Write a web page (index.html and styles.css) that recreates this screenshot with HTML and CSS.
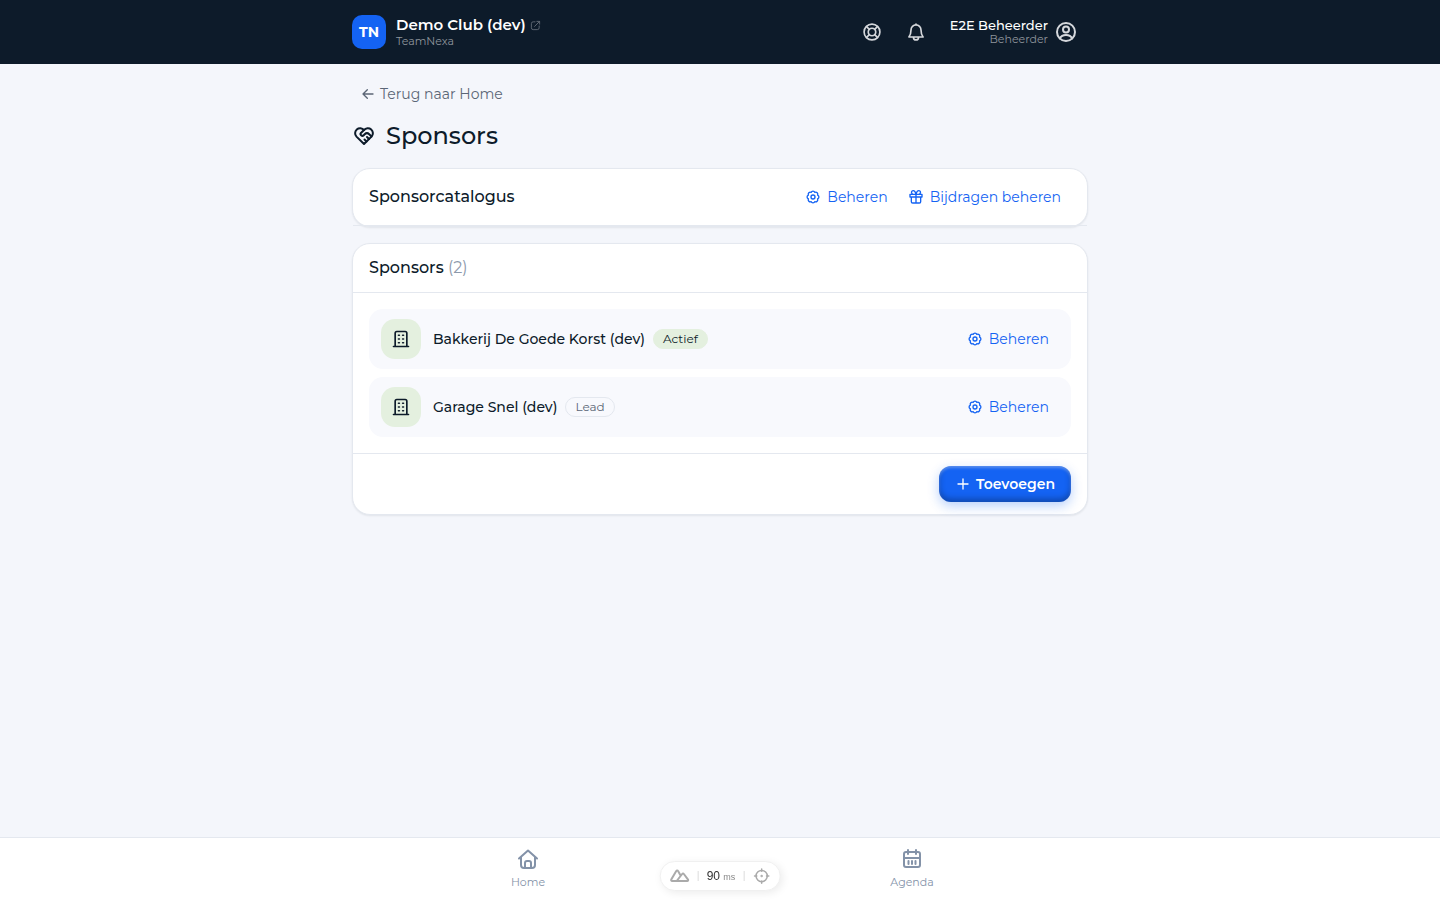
FILE: index.html
```html
<!DOCTYPE html>
<html lang="nl">
<head>
    <meta charset="UTF-8">
    <meta name="viewport" content="width=device-width, initial-scale=1.0">
    <title>Sponsors</title>
    <link rel="stylesheet" href="styles.css">
</head>
<body>
    <svg class="sprite" aria-hidden="true">
        <symbol id="gear" viewBox="0 0 24 24">
            <path d="M9.130 5.070a3.100 3.100 0 0 1 5.740 0a3.100 3.100 0 0 1 4.060 4.060a3.100 3.100 0 0 1 0 5.740a3.100 3.100 0 0 1-4.060 4.060a3.100 3.100 0 0 1-5.740 0a3.100 3.100 0 0 1-4.060-4.060a3.100 3.100 0 0 1 0-5.740a3.100 3.100 0 0 1 4.060-4.060z"/>
            <circle cx="12" cy="12" r="3"/>
        </symbol>
        <symbol id="building" viewBox="0 0 24 24">
            <path d="M3 21h18M5 21V5a2 2 0 0 1 2-2h10a2 2 0 0 1 2 2v16"/>
            <path d="M9 7.500h1M14 7.500h1M9 12h1M14 12h1M9 16.500h1M14 16.500h1"/>
        </symbol>
    </svg>

    <header class="topbar">
        <div class="container topbar-inner">
            <div class="logo">TN</div>
            <div class="club">
                <a href="#" class="club-name">Demo Club (dev)
                    <svg class="icon icon-link" viewBox="0 0 24 24"><path d="M11 4H7a4 4 0 0 0-4 4v9a4 4 0 0 0 4 4h9a4 4 0 0 0 4-4v-4M10 14L21 3M15 3h6v6"/></svg>
                </a>
                <span class="sub">TeamNexa</span>
            </div>
            <div class="actions">
                <button type="button" class="icon-button" aria-label="Help">
                    <svg class="icon icon-20" viewBox="0 0 24 24"><circle cx="12" cy="12" r="9.500"/><circle cx="12" cy="12" r="4.500"/><path d="M5.500 5.500l3.300 3.300M18.500 5.500l-3.300 3.300M5.500 18.500l3.300-3.300M18.500 18.500l-3.300-3.300"/></svg>
                </button>
                <button type="button" class="icon-button" aria-label="Meldingen">
                    <svg class="icon icon-20" viewBox="0 0 24 24"><path d="M12 2.500v1M12 3.500a6 6 0 0 1 6 6c0 4.500 1 6.500 2.500 8.500h-17c1.500-2 2.500-4 2.500-8.500a6 6 0 0 1 6-6zM9 18.500a3 3 0 0 0 6 0"/></svg>
                </button>
                <button type="button" class="user">
                    <span class="user-text">
                        <span class="user-name">E2E Beheerder</span>
                        <span class="sub">Beheerder</span>
                    </span>
                    <svg class="icon icon-24" viewBox="0 0 24 24"><circle cx="12" cy="12" r="9"/><circle cx="12" cy="9.500" r="3"/><path d="M6 18.500c1-2.500 3-3.500 6-3.500s5 1 6 3.500"/></svg>
                </button>
            </div>
        </div>
    </header>

    <main class="container">
        <a href="#" class="back">
            <svg class="icon icon-16" viewBox="0 0 24 24"><path d="M19.500 12h-15M11 5.500l-6.500 6.500l6.500 6.500"/></svg>
            Terug naar Home
        </a>
        <h1>
            <svg class="icon icon-24" viewBox="0 0 24 24"><path d="M19.500 12.600L12 20l-7.500-7.400a5 5 0 1 1 7.500-6.600a5 5 0 1 1 7.500 6.600"/><path d="M12 6L8.700 9.300a1 1 0 0 0 0 1.400l.5.500c.7.7 1.800.7 2.500 0l1-1a3.200 3.200 0 0 1 4.500 0l2.300 2.300M12.500 15.500l2 2M15 13l2 2"/></svg>
            Sponsors
        </h1>

        <section class="card">
            <div class="card-header catalog-header">
                <h2>Sponsorcatalogus</h2>
                <div class="links">
                    <button type="button" class="text-button"><svg class="icon icon-16"><use href="#gear"/></svg>Beheren</button>
                    <button type="button" class="text-button"><svg class="icon icon-16" viewBox="0 0 24 24"><path d="M3 8h18v4H3zM5 12v7a2 2 0 0 0 2 2h10a2 2 0 0 0 2-2v-7M12 8v13M12 8C11 4 9.500 2.500 8 2.500a2.600 2.600 0 0 0 0 5.500M12 8c1-4 2.500-5.500 4-5.500a2.600 2.600 0 0 1 0 5.500"/></svg>Bijdragen beheren</button>
                </div>
            </div>
        </section>

        <section class="card">
            <div class="card-header">
                <h2>Sponsors <span class="count">(2)</span></h2>
            </div>
            <ul class="list">
                <li class="row">
                    <span class="tile"><svg class="icon icon-20"><use href="#building"/></svg></span>
                    <span class="name">Bakkerij De Goede Korst (dev)</span>
                    <span class="badge badge-active">Actief</span>
                    <button type="button" class="text-button"><svg class="icon icon-16"><use href="#gear"/></svg>Beheren</button>
                </li>
                <li class="row">
                    <span class="tile"><svg class="icon icon-20"><use href="#building"/></svg></span>
                    <span class="name">Garage Snel (dev)</span>
                    <span class="badge">Lead</span>
                    <button type="button" class="text-button"><svg class="icon icon-16"><use href="#gear"/></svg>Beheren</button>
                </li>
            </ul>
            <div class="card-footer">
                <button type="button" class="primary">
                    <svg class="icon icon-16" viewBox="0 0 24 24"><path d="M12 4.500v15M4.500 12h15"/></svg>
                    Toevoegen
                </button>
            </div>
        </section>
    </main>

    <nav class="bottom-nav">
        <div class="bottom-nav-inner">
            <a href="#" class="nav-item">
                <svg class="icon icon-24" viewBox="0 0 24 24"><path d="M3 11.500l9-8l9 8M5 10v8a3 3 0 0 0 3 3h8a3 3 0 0 0 3-3v-8M9 21v-5a2 2 0 0 1 2-2h2a2 2 0 0 1 2 2v5"/></svg>
                Home
            </a>
            <a href="#" class="nav-item">
                <svg class="icon icon-24" viewBox="0 0 24 24"><rect x="4" y="5" width="16" height="15" rx="2"/><path d="M8 3v4M16 3v4M4 11h16M8.500 14v3M12 14v3M15.500 14v3"/></svg>
                Agenda
            </a>
        </div>
    </nav>

    <div class="devtools">
        <svg class="icon icon-mountain" viewBox="0 0 20 14"><path d="M7 12H2.500a1 1 0 0 1-.9-1.500l5-8.500a1 1 0 0 1 1.800 0l2.100 3.700M7 12l5.500-7a1 1 0 0 1 1.700 0l4.200 5.600a.9.900 0 0 1-.8 1.400z"/></svg>
        <span class="divider"></span>
        <span class="timing">90 <small>ms</small></span>
        <span class="divider"></span>
        <svg class="icon icon-target" viewBox="0 0 24 24"><circle cx="12" cy="12" r="7.500"/><circle cx="12" cy="12" r=".6"/><path d="M12 2.500v3M12 18.500v3M2.500 12h3M18.500 12h3"/></svg>
    </div>
</body>
</html>
```

FILE: styles.css
```css
* {
    box-sizing: border-box;
}

body {
    margin: 0;
    min-height: 100vh;
    display: flex;
    flex-direction: column;
    font-family: Montserrat, Inter, sans-serif;
    font-size: 14px;
    line-height: 20px;
    color: #0d1b2a;
    background-color: #f4f6fb;
}

a {
    color: inherit;
    text-decoration: none;
}

button {
    font: inherit;
    color: inherit;
    background: none;
    border: none;
    padding: 0;
    cursor: pointer;
}

.sprite {
    position: absolute;
    width: 0;
    height: 0;
}

.icon {
    fill: none;
    stroke: currentColor;
    stroke-width: 2;
    stroke-linecap: round;
    stroke-linejoin: round;
    flex-shrink: 0;
}

.icon-16 {
    width: 16px;
    height: 16px;
}

.icon-20 {
    width: 20px;
    height: 20px;
}

.icon-24 {
    width: 24px;
    height: 24px;
}

.container {
    width: 100%;
    max-width: 768px;
    margin: 0 auto;
    padding: 0 16px;
}

/* top bar */
.topbar {
    background-color: #0d1b2a;
    color: #fff;
}

.topbar-inner {
    height: 64px;
    display: flex;
    align-items: center;
    gap: 10px;
}

.logo {
    width: 34px;
    height: 34px;
    border-radius: 10px;
    background-color: #1463f3;
    font-weight: 700;
    line-height: 34px;
    text-align: center;
}

.club,
.user-text {
    display: flex;
    flex-direction: column;
    padding-bottom: 2px;
}

.club-name {
    display: flex;
    align-items: center;
    gap: 4px;
    font-size: 15px;
    font-weight: 600;
}

.icon-link {
    width: 11px;
    height: 11px;
    color: #626b76;
}

.sub {
    font-size: 11px;
    line-height: 12px;
    color: #8f959c;
}

.actions {
    display: flex;
    align-items: center;
    margin-left: auto;
    color: #d5d8dc;
}

.icon-button {
    display: flex;
    padding: 12px;
}

.user {
    display: flex;
    align-items: center;
    gap: 6px;
    padding: 0 10px 0 12px;
    text-align: right;
}

.user-name {
    font-size: 13px;
    font-weight: 500;
    line-height: 16px;
    color: #fff;
}

/* page */
main {
    flex: 1;
}

.back {
    display: flex;
    width: fit-content;
    align-items: center;
    gap: 4px;
    padding: 20px 8px 16px;
    color: #5b6676;
}

h1 {
    display: flex;
    align-items: center;
    gap: 10px;
    margin: 0 0 16px;
    font-size: 24px;
    font-weight: 500;
    line-height: 32px;
}

h2 {
    margin: 0;
    font-size: 16px;
    font-weight: 500;
    line-height: 24px;
}

.card {
    margin-bottom: 16px;
    background-color: #fff;
    border: 1px solid #e4e8ef;
    border-radius: 18px;
    box-shadow: 0 1px 2px rgba(15, 27, 42, 0.08);
}

.card-header {
    padding: 12px 16px;
    border-bottom: 1px solid #e4e8ef;
}

.catalog-header {
    display: flex;
    align-items: center;
    justify-content: space-between;
    padding: 16px;
}

.count {
    font-weight: 400;
    color: #8c99ab;
}

.links {
    display: flex;
}

.text-button {
    display: flex;
    align-items: center;
    gap: 6px;
    padding: 0 10px;
    color: #1463f3;
}

.list {
    display: flex;
    flex-direction: column;
    gap: 8px;
    margin: 0;
    padding: 16px;
    list-style: none;
}

.row {
    display: flex;
    align-items: center;
    padding: 10px 12px;
    border-radius: 14px;
    background-color: #f8f9fd;
}

.row .text-button {
    margin-left: auto;
}

.tile {
    display: flex;
    align-items: center;
    justify-content: center;
    width: 40px;
    height: 40px;
    margin-right: 12px;
    border-radius: 14px;
    background-color: #e4f0df;
}

.name {
    font-weight: 500;
}

.badge {
    margin-left: 8px;
    padding: 0 9px;
    border: 1px solid #e4e8ef;
    border-radius: 10px;
    font-size: 12px;
    line-height: 18px;
    color: #5b6676;
}

.badge-active {
    color: #0d1b2a;
    background-color: #e4f0df;
    border-color: #e4f0df;
}

.card-footer {
    display: flex;
    justify-content: flex-end;
    padding: 12px 16px;
    border-top: 1px solid #e4e8ef;
}

.primary {
    display: flex;
    align-items: center;
    gap: 5px;
    padding: 8px 16px;
    border-radius: 12px;
    font-weight: 600;
    color: #fff;
    background-color: #1463f3;
    box-shadow: inset 0 2px 3px rgba(255, 255, 255, 0.3), inset 0 -3px 6px rgba(0, 0, 0, 0.3), 0 4px 12px rgba(20, 99, 243, 0.3);
}

/* bottom navigation */
.bottom-nav {
    background-color: #fff;
    border-top: 1px solid #e4e8ef;
}

.bottom-nav-inner {
    display: flex;
    max-width: 768px;
    margin: 0 auto;
}

.nav-item {
    flex: 1;
    display: flex;
    flex-direction: column;
    align-items: center;
    gap: 1px;
    padding: 9px 0 8px;
    font-size: 11px;
    color: #8392a8;
}

/* floating devtools pill */
.devtools {
    position: fixed;
    bottom: 9px;
    left: 50%;
    transform: translateX(-50%);
    display: flex;
    align-items: center;
    gap: 8px;
    height: 30px;
    padding: 0 9px;
    border: 1px solid #f0f0f0;
    border-radius: 15px;
    background-color: #fff;
    box-shadow: 2px 2px 8px rgba(0, 0, 0, 0.08);
    color: #aaa;
}

.icon-mountain {
    width: 20px;
    height: 14px;
}

.icon-target {
    width: 18px;
    height: 18px;
}

.divider {
    width: 1px;
    height: 10px;
    background-color: #ddd;
}

.timing {
    font-family: "Liberation Sans", Arial, sans-serif;
    font-size: 12px;
    color: #333;
}

.timing small {
    font-size: 9px;
    color: #888;
}
```
